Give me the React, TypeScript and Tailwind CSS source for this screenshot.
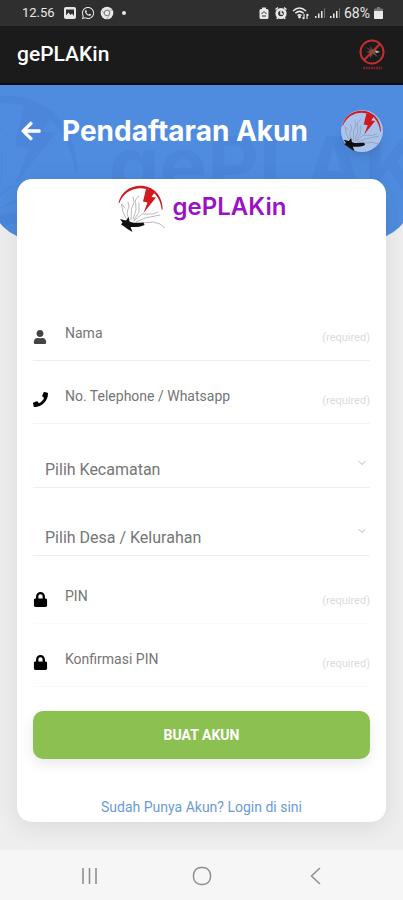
import React from "react";
import { FaArrowLeft, FaLock, FaPhone, FaUser, FaWhatsapp } from "react-icons/fa";
import { ChevronDown } from "lucide-react";

type LogoProps = {
  className?: string;
  mono?: boolean;
};

type FieldProps = {
  id: string;
  label: string;
  type?: string;
  icon: React.ReactNode;
  className?: string;
};

type SelectFieldProps = {
  id: string;
  placeholder: string;
};

const Logo = ({ className, mono }: LogoProps) => {
  const red = mono ? "currentColor" : "#d01a20";
  const black = mono ? "currentColor" : "#111111";
  const gray = mono ? "currentColor" : "#8a8a90";

  return (
    <svg viewBox="0 0 48 48" className={className} aria-hidden="true">
      <path
        d="M1.500 18C4 7 13 .8 23.500 .8C36 .8 45.500 10 45.700 24.500L44.700 24.500C43.500 11.500 35 3.400 24 3.200C14 3.200 6 8.500 2.300 18Z"
        fill={red}
      />
      <path d="M29 4L38.500 6L34.500 12L39 12.500L26.500 28L30.500 17.500L26 16.500Z" fill={red} />
      <g fill="none" stroke={gray} strokeWidth={mono ? ".35" : ".6"} strokeLinecap="round" strokeLinejoin="round">
        <path d="M9 33L6 27L4.500 19L8 23" />
        <path d="M12 35L10 28L12 21L11 17" />
        <path d="M14 35L14.500 24L17 17L16 12" />
        <path d="M16 34L19 25L18.500 15L22 11" />
        <path d="M17 35L22 27L22 18" />
        <path d="M17 36L25 29L36 29L41 27" />
        <path d="M19 37L28 33L43 30" />
        <path d="M25 38L36 37L43 39L48 43" />
      </g>
      <path
        d="M3 34L9 35.500L11.500 32L12.500 36.500C16 38.500 21 37.500 26.500 37.500L27.500 40C23 42.500 17 42 13.500 42L15.500 47L10.500 44L6.500 41L4 39.500L5.500 37.500Z"
        fill={black}
      />
    </svg>
  );
};

const StatusBar = () => (
  <div className="flex h-[26px] items-center justify-between bg-[#2f2f2f] pl-[22px] pr-5 text-[#e8e8e8]">
    <div className="flex items-center gap-1">
      <span className="mr-1 text-[13px] leading-4">12.56</span>
      <svg viewBox="0 0 14 14" className="size-[14px]">
        <rect x="1" y="1" width="12" height="12" rx="2" fill="currentColor" />
        <path d="M3 3.500H11V10L9 7.500L7.500 9L5.500 6.500L3 9.500Z" fill="#2f2f2f" />
        <path d="M3 11L5.500 8L7.500 10L9 9L11 11Z" fill="currentColor" />
      </svg>
      <FaWhatsapp className="size-[14px]" />
      <svg viewBox="0 0 14 14" className="ml-px size-[14px]">
        <circle cx="7" cy="7" r="6.300" fill="currentColor" />
        <circle cx="7" cy="7" r="2.800" fill="none" stroke="#777777" />
        <path d="M7 4.200H12.500M4.500 8.500L2 4.500M9.500 8.500L7 13" stroke="#999999" strokeWidth=".8" />
      </svg>
      <span className="ml-1 size-1 rounded-full bg-current" />
    </div>
    <div className="flex items-center gap-1">
      <svg viewBox="0 0 10 14" className="h-[14px] w-[10px]">
        <path d="M3 1.500H7V3H8Q9.500 3 9.500 4.500V11.500Q9.500 13 8 13H2Q.5 13 .5 11.500V4.500Q.5 3 2 3H3Z" fill="currentColor" />
        <path d="M2.500 8L5 5.500L7.500 8M3 10H7" fill="none" stroke="#2f2f2f" />
      </svg>
      <svg viewBox="0 0 14 14" className="ml-px size-[14px]">
        <circle cx="7" cy="7.500" r="4.200" fill="none" stroke="currentColor" strokeWidth="2.800" />
        <path d="M7 5V8H9M1.500 3.500L4 1.500M12.500 3.500L10 1.500M3 13L4 11M11 13L10 11" fill="none" stroke="currentColor" strokeWidth="1.600" />
      </svg>
      <svg viewBox="0 0 18 14" className="h-[14px] w-[18px]" fill="none" stroke="currentColor" strokeWidth="1.500">
        <path d="M1 5Q7.500 -1 14 5M3.300 7.300Q7.500 3.500 11.700 7.300M5.500 9.500Q7.500 8 9.500 9.500" />
        <circle cx="7.500" cy="11" r=".7" />
        <path d="M12 8V13M10.500 11.500L12 13M15 13V8M16.500 9.500L15 8" strokeWidth="1.200" />
      </svg>
      <svg viewBox="0 0 26 12" className="h-3 w-[26px]">
        <path d="M1 9H2.500V11H1ZM4 6.500H5.500V11H4ZM7 4H8.500V11H7ZM16 9H17.500V11H16ZM19 6.500H20.500V11H19ZM22 4H23.500V11H22Z" fill="currentColor" />
        <path d="M10 1.500H11V11H10ZM25 1.500H26V11H25Z" fill="#777777" />
      </svg>
      <span className="text-sm leading-4">68%</span>
      <svg viewBox="0 0 9 12" className="h-3 w-[9px]">
        <path d="M3 0H6V1.500H8Q9 1.500 9 2.500V11Q9 12 8 12H1Q0 12 0 11V2.500Q0 1.500 1 1.500H3Z" fill="#777777" />
        <path d="M0 4H9V11Q9 12 8 12H1Q0 12 0 11Z" fill="currentColor" />
      </svg>
    </div>
  </div>
);

const AppBar = () => (
  <div className="flex h-[59px] items-center justify-between border-b-2 border-[#090d18] bg-[#1b1b1b] px-[17px]">
    <span className="text-[21px] font-medium text-white">gePLAKin</span>
    <svg viewBox="0 0 28 34" className="h-[34px] w-7">
      <path d="M8 9L13 12L12 8L15 12L19 9L17 13L22 14L17 15L20 19L15 16L12 20L12 15L8 14L12 13Z" fill="#5f5a48" />
      <path d="M17 12L22 14L18 15Z" fill="#b8b8a8" />
      <circle cx="14" cy="14" r="11.500" fill="none" stroke="#c22f31" strokeWidth="2" />
      <path d="M6 22L22 6" stroke="#c22f31" strokeWidth="2.200" />
      <path d="M5 30H24" stroke="#7d2023" strokeWidth="2.500" strokeDasharray="2 .6" />
    </svg>
  </div>
);

const Header = () => (
  <header className="relative -mx-2 h-[154px] overflow-hidden rounded-b-[40px] bg-[#4f8cdf] px-7 pt-6">
    <div
      className="absolute -left-[61px] top-2 flex w-max items-start text-[#3d6fcb] opacity-20"
      aria-hidden="true"
    >
      <Logo mono className="size-[154px]" />
      <span className="ml-6 mt-8 font-[Inter] text-[80px] font-bold leading-none">gePLAKin</span>
    </div>
    <div className="relative flex h-11 items-center">
      <a href="#" aria-label="Kembali" className="text-white">
        <FaArrowLeft className="size-[22px]" />
      </a>
      <h1 className="ml-5 font-[Inter] text-[28px] font-bold leading-8 text-white">Pendaftaran Akun</h1>
      <div className="ml-auto size-[42px] rounded-full bg-[#a9c3ec] shadow-lg">
        <Logo className="size-[42px]" />
      </div>
    </div>
  </header>
);

const Field = ({ id, label, type = "text", icon, className = "border-[#eeeeee]" }: FieldProps) => (
  <div className={`flex h-12 items-center border-b ${className}`}>
    <span className="w-8 shrink-0">{icon}</span>
    <label htmlFor={id} className="pb-2 text-sm text-[#757575]">
      {label}
    </label>
    <input
      id={id}
      type={type}
      placeholder="(required)"
      className="min-w-0 flex-1 bg-transparent pt-1 text-right text-[11px] text-[#757575] outline-none placeholder:text-[#dadcdc]"
    />
  </div>
);

const SelectField = ({ id, placeholder }: SelectFieldProps) => (
  <div className="relative">
    <select
      id={id}
      aria-label={placeholder}
      className="block h-12 w-full appearance-none border-b border-[#eeeeee] bg-transparent pl-3 pt-3 text-base text-[#747678] outline-none"
    >
      <option>{placeholder}</option>
    </select>
    <ChevronDown className="pointer-events-none absolute right-0.5 top-[17px] size-3 text-[#b5b5b5]" />
  </div>
);

const RegisterForm = () => (
  <form className="mt-20 flex flex-col" onSubmit={(e) => e.preventDefault()}>
    <div className="flex flex-col gap-[15px]">
      <Field id="nama" label="Nama" icon={<FaUser className="size-[14px] text-[#444444]" />} />
      <Field
        id="telepon"
        label="No. Telephone / Whatsapp"
        type="tel"
        icon={<FaPhone className="size-[15px] text-black" />}
        className="border-[#f4f4f4]"
      />
    </div>
    <div className="my-4 flex flex-col gap-5">
      <SelectField id="kecamatan" placeholder="Pilih Kecamatan" />
      <SelectField id="desa" placeholder="Pilih Desa / Kelurahan" />
    </div>
    <div className="mt-1 flex flex-col gap-[15px]">
      <Field
        id="pin"
        label="PIN"
        type="password"
        icon={<FaLock className="size-[15px] text-black" />}
        className="border-[#fafafa]"
      />
      <Field
        id="konfirmasi"
        label="Konfirmasi PIN"
        type="password"
        icon={<FaLock className="size-[15px] text-black" />}
        className="border-[#fafafa]"
      />
    </div>
    <button
      type="submit"
      className="mt-6 h-12 rounded-[10px] bg-[#8cc152] text-sm font-bold text-white shadow-[0_5px_14px_rgba(0,0,0,0.09)]"
    >
      BUAT AKUN
    </button>
    <a href="#" className="mt-10 text-center text-sm leading-4 text-[#6b9bd6]">
      Sudah Punya Akun? Login di sini
    </a>
  </form>
);

const NavigationBar = () => (
  <nav className="flex h-[50px] items-center justify-between bg-[#f6f6f6] px-20 pt-0.5 text-[#8f8f8f]">
    <button type="button" aria-label="Recents">
      <svg viewBox="0 0 20 20" className="size-5" stroke="currentColor" strokeWidth="1.600">
        <path d="M3 2V18M9.500 2V18M16 2V18" />
      </svg>
    </button>
    <button type="button" aria-label="Home">
      <svg viewBox="0 0 20 20" className="size-5" fill="none" stroke="currentColor" strokeWidth="1.500">
        <rect x="1.500" y="1.500" width="17" height="17" rx="7.500" />
      </svg>
    </button>
    <button type="button" aria-label="Back">
      <svg viewBox="0 0 20 20" className="size-5" fill="none" stroke="currentColor" strokeWidth="1.500">
        <path d="M17 2L8.500 10L17 18" />
      </svg>
    </button>
  </nav>
);

const App = () => {
  return (
    <div className="flex min-h-screen flex-col bg-[#eeeeee] font-[Roboto,sans-serif]">
      <StatusBar />
      <AppBar />
      <main className="flex-1 overflow-hidden pb-7">
        <Header />
        <section className="relative mx-[17px] -mt-[60px] rounded-[15px] bg-white px-4 pb-[7px] pt-1.5 shadow-[0_4px_24px_rgba(0,0,0,0.09)]">
          <div className="flex items-center justify-center gap-2">
            <Logo className="size-12" />
            <span className="pb-1 font-[Inter] text-2xl font-semibold leading-8 text-[#9a12c4]">gePLAKin</span>
          </div>
          <RegisterForm />
        </section>
      </main>
      <NavigationBar />
    </div>
  );
};

export default App;
